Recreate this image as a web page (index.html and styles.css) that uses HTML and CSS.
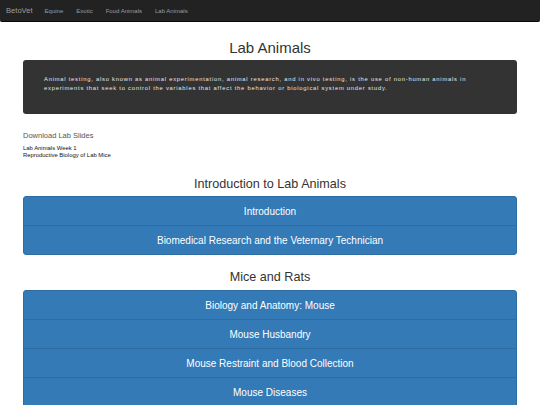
FILE: index.html
```html
<!DOCTYPE html>
<html lang="en">
  <head>
    <meta charset="UTF-8" />
    <title>BetoVet - Lab Animals</title>
    <link rel="stylesheet" href="styles.css">
  </head>
  <body>
    <!-- 导航栏 -->
    <nav class="navbar">
      <a href="#" class="brand">BetoVet</a>
      <ul class="nav-links">
        <li><a href="#">Equine</a></li>
        <li><a href="#">Exotic</a></li>
        <li><a href="#">Food Animals</a></li>
        <li><a href="#">Lab Animals</a></li>
      </ul>
    </nav>

    <div class="container">
      <h2 class="page-title">Lab Animals</h2>

      <div class="jumbotron">
        <p>Animal testing, also known as animal experimentation, animal research, and in vivo testing, is the use of non-human animals in experiments that seek to control the variables that affect the behavior or biological system under study.</p>
      </div>

      <!-- 幻灯片下载 -->
      <div class="downloads">
        <h4>Download Lab Slides</h4>
        <a href="#">Lab Animals Week 1</a>
        <a href="#">Reproductive Biology of Lab Mice</a>
      </div>

      <h3 class="section-title">Introduction to Lab Animals</h3>
      <div class="btn-list">
        <a href="#" class="btn">Introduction</a>
        <a href="#" class="btn">Biomedical Research and the Veternary Technician</a>
      </div>

      <h3 class="section-title">Mice and Rats</h3>
      <div class="btn-list">
        <a href="#" class="btn">Biology and Anatomy: Mouse</a>
        <a href="#" class="btn">Mouse Husbandry</a>
        <a href="#" class="btn">Mouse Restraint and Blood Collection</a>
        <a href="#" class="btn">Mouse Diseases</a>
        <a href="#" class="btn">Biology and Anatomy: Rat</a>
        <a href="#" class="btn">Rat Husbandry</a>
      </div>
    </div>
  </body>
</html>
```

FILE: styles.css
```css
* {
  margin: 0;
  padding: 0;
  box-sizing: border-box;
}
ul {
  list-style: none;
}
a {
  text-decoration: none;
}

body {
  font-family: "Liberation Sans", Arial, sans-serif;
  color: #333;
  background: #fff;
}

.navbar {
  display: flex;
  align-items: center;
  height: 22px;
  background-color: #222;
  border-bottom: 1px solid #080808;
  border-radius: 0 0 2px 2px;
}

.navbar .brand {
  padding: 0 5.5px 0 6px;
  font-size: 7.6px;
  color: #9d9d9d;
}

.nav-links {
  display: flex;
}

.nav-links a {
  display: block;
  padding: 0 6.5px;
  font-size: 6px;
  color: #9d9d9d;
}

.container {
  padding: 0 23px;
}

.page-title {
  margin: 18px 0 3px;
  font-size: 15px;
  font-weight: normal;
  line-height: 1.1;
  text-align: center;
}

.jumbotron {
  padding: 15px 30px 12px 21px;
  background-color: #333;
  border-radius: 3px;
  color: #e6e6e6;
}

.jumbotron p {
  margin-bottom: 9px;
  font-size: 5.8px;
  letter-spacing: 0.77px;
  line-height: 9px;
}

.downloads {
  margin-top: 17px;
}

.downloads h4 {
  margin-bottom: 4px;
  font-size: 7.5px;
  font-weight: normal;
  line-height: 10px;
  color: #555;
}

.downloads a {
  display: block;
  font-size: 5.9px;
  line-height: 7.5px;
  color: #111;
}

.section-title {
  margin: 18px 0 5px;
  font-size: 12.6px;
  font-weight: normal;
  line-height: 1.1;
  text-align: center;
}

.btn-list + .section-title {
  margin-top: 16px;
}

.btn-list {
  display: flex;
  flex-direction: column;
}

.btn-list .btn {
  display: flex;
  align-items: center;
  justify-content: center;
  height: 30px;
  margin-top: -1px;
  background-color: #337ab7;
  border: 1px solid #2e6da4;
  color: #fff;
  font-size: 10px;
}

.btn-list .btn:first-child {
  margin-top: 0;
  border-radius: 3px 3px 0 0;
}

.btn-list .btn:last-child {
  border-radius: 0 0 3px 3px;
}
```
